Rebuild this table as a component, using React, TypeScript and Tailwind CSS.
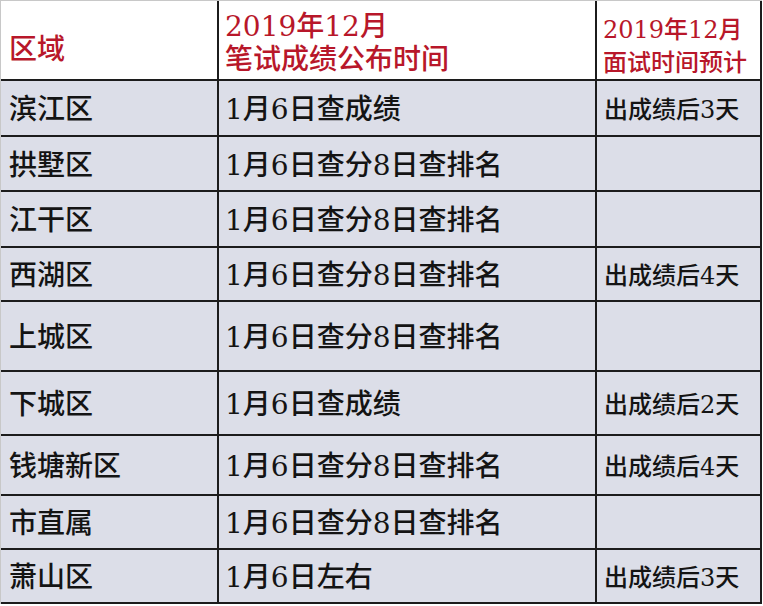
import React from 'react';

const rows: { area: string; score: string; interview: string; h: string }[] = [
  { area: '滨江区', score: '1月6日查成绩', interview: '出成绩后3天', h: 'h-[56px]' },
  { area: '拱墅区', score: '1月6日查分8日查排名', interview: '', h: 'h-[55px]' },
  { area: '江干区', score: '1月6日查分8日查排名', interview: '', h: 'h-[56px]' },
  { area: '西湖区', score: '1月6日查分8日查排名', interview: '出成绩后4天', h: 'h-[54px]' },
  { area: '上城区', score: '1月6日查分8日查排名', interview: '', h: 'h-[70px]' },
  { area: '下城区', score: '1月6日查成绩', interview: '出成绩后2天', h: 'h-[64px]' },
  { area: '钱塘新区', score: '1月6日查分8日查排名', interview: '出成绩后4天', h: 'h-[60px]' },
  { area: '市直属', score: '1月6日查分8日查排名', interview: '', h: 'h-[54px]' },
  { area: '萧山区', score: '1月6日左右', interview: '出成绩后3天', h: 'h-[54px]' },
];

const font = "font-['DejaVu_Serif','Noto_Sans_CJK_SC',serif]";

export default function App() {
  return (
    <div className={`w-[763px] h-[606px] bg-white font-medium ${font}`}>
      <div className="w-[762px] border-t border-l border-[#c8c8c8]">
        {/* header */}
        <div className="flex h-[80px] bg-white text-[#b8172a]">
          <div className="w-[218px] border-r-2 border-b-2 border-[#1c1c1c] flex items-center pl-[8px] pt-[20px] text-[28px] leading-none">
            区域
          </div>
          <div className="w-[378px] border-r-2 border-b-2 border-[#1c1c1c] flex flex-col justify-center pl-[6px] pt-[6px] text-[28px] leading-[33px]">
            <span>2019年12月</span>
            <span>笔试成绩公布时间</span>
          </div>
          <div className="w-[165px] border-r-2 border-b-2 border-[#1c1c1c] flex flex-col justify-center pl-[6px] pt-[14px] text-[24px] leading-[33px] whitespace-nowrap">
            <span>2019年12月</span>
            <span>面试时间预计</span>
          </div>
        </div>
        {rows.map((r, i) => (
          <div key={i} className={`flex ${r.h} bg-[#dcdee8] text-[#141414]`}>
            <div className="w-[218px] border-r-2 border-b-2 border-[#1c1c1c] flex items-center pl-[8px] pt-[4px] text-[28px] leading-none">
              {r.area}
            </div>
            <div className="w-[378px] border-r-2 border-b-2 border-[#1c1c1c] flex items-center pl-[6px] pt-[4px] text-[28px] leading-none whitespace-nowrap">
              {r.score}
            </div>
            <div className="w-[165px] border-r-2 border-b-2 border-[#1c1c1c] flex items-center pl-[7px] pt-[4px] text-[24px] leading-none whitespace-nowrap">
              {r.interview}
            </div>
          </div>
        ))}
      </div>
    </div>
  );
}
